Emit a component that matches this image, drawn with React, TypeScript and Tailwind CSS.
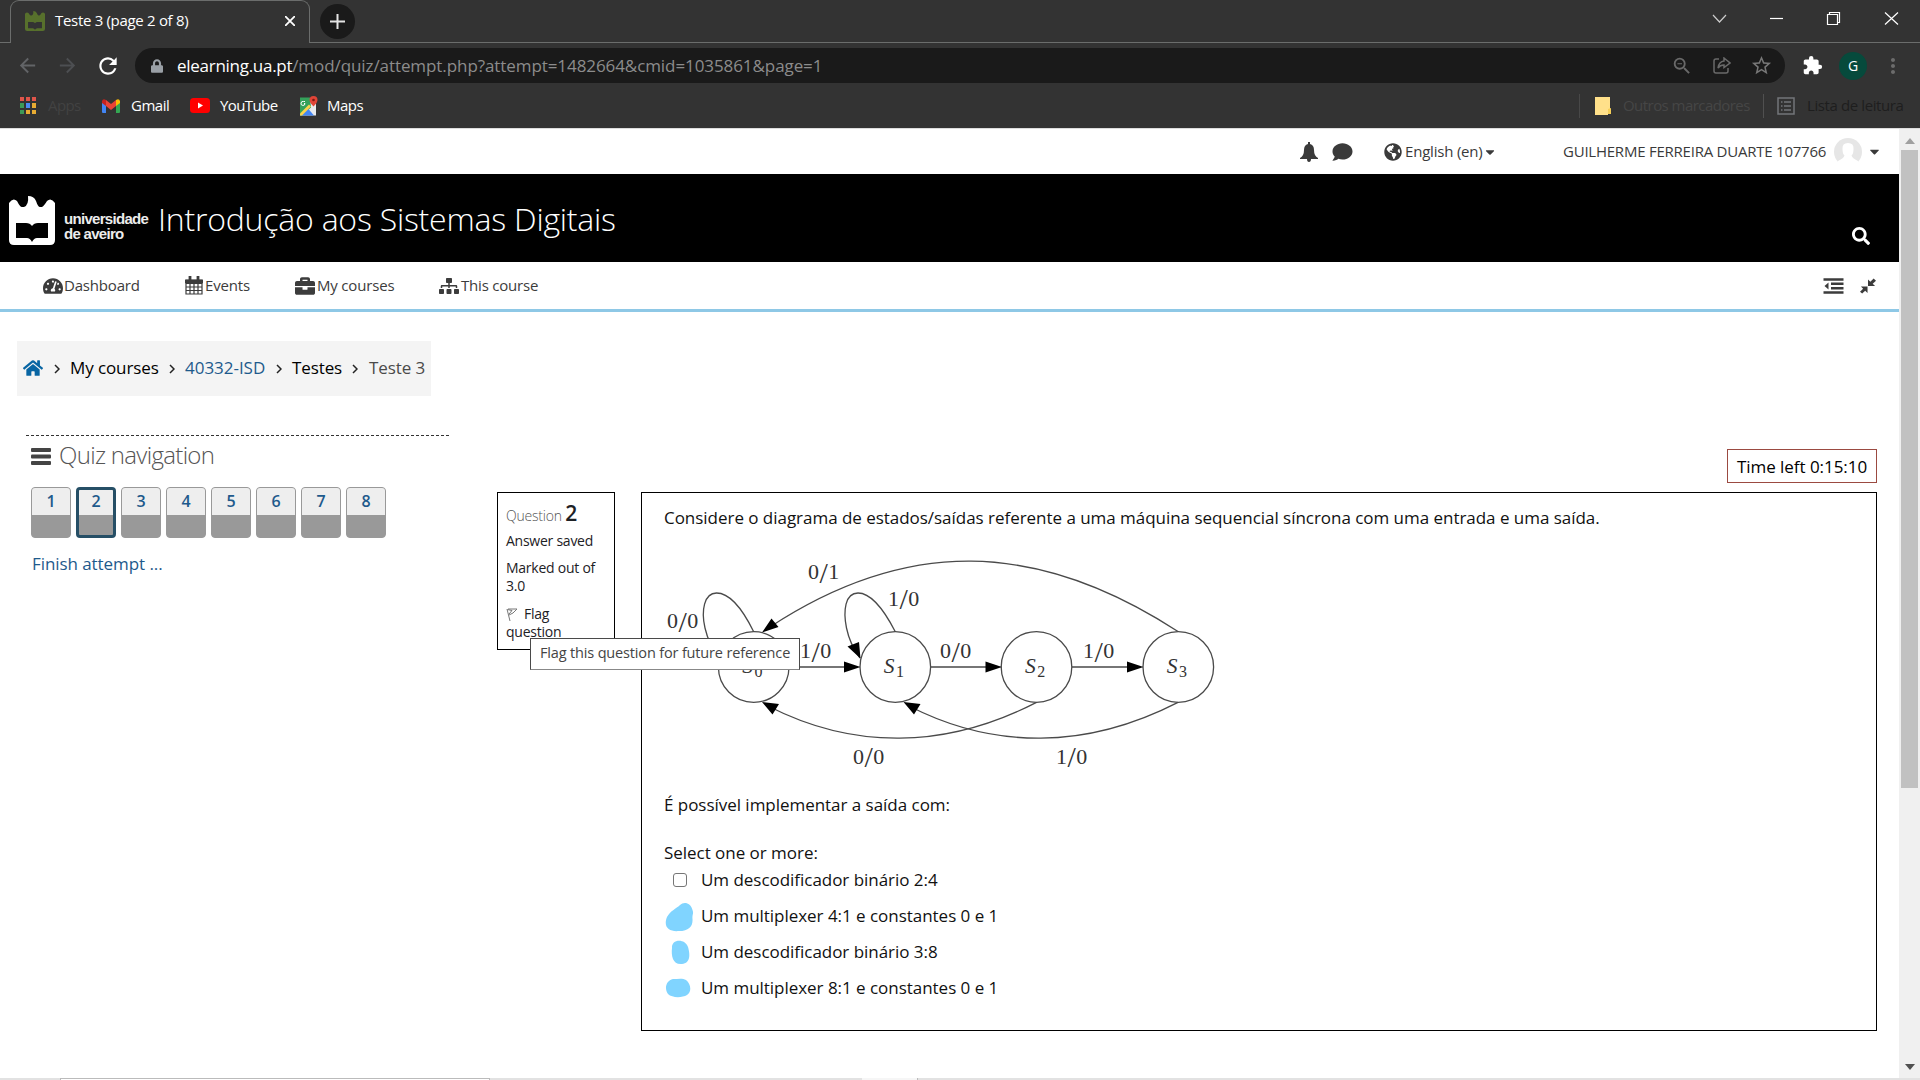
import React from "react";
import {
  FaBell, FaComment, FaGlobeAmericas, FaCaretDown, FaSearch, FaTachometerAlt, FaBriefcase,
  FaSitemap, FaHome, FaLock,
} from "react-icons/fa";
import { MdExtension, MdMoreVert, MdRefresh, MdStarBorder, MdZoomOut, MdArrowBack, MdArrowForward } from "react-icons/md";

const appColors = ["#e0554a", "#e0554a", "#e0554a", "#3d9a57", "#4a8af4", "#e8ac33", "#3d9a57", "#e8ac33", "#e8ac33"];

function Castle({ className, book }: { className: string; book: string }) {
  return (
    <svg viewBox="0 0 46 49" preserveAspectRatio="none" className={className}>
      <path fill="currentColor" d="M0 7Q4 1 8 5Q11 11 13 11H15Q20 9 19 0Q25 0 27 5Q29 11 31 11H33Q35 10 38 5Q42 1 46 7V44Q46 49 41 49H5Q0 49 0 44Z" />
      <path fill={book} d="M7 27H17Q21 27 23 30Q25 27 29 27H39V42H28Q25 42 23 46Q21 42 18 42H7Z" />
    </svg>
  );
}

function Tab() {
  return (
    <div className="flex h-[43px] items-start">
      <div className="h-[43px] w-[10px] border-b border-[#6b6d6c]" />
      <div className="flex h-[43px] w-[300px] items-center rounded-t-[9px] border border-b-0 border-[#6b6d6c] pb-[3px] pl-[14px] pr-[14px]">
        <Castle className="h-5 w-5 text-[#57702c]" book="#333" />
        <span className="ml-[10px] flex-1 whitespace-nowrap text-[15px] tracking-[-0.31px] text-white">Teste 3 (page 2 of 8)</span>
        <svg className="h-[10px] w-[10px]" viewBox="0 0 10 10"><path d="M0 0L10 10M10 0L0 10" stroke="#fff" strokeWidth="1.8" /></svg>
      </div>
      <div className="flex h-[43px] flex-1 border-b border-[#6b6d6c]">
        <div className="ml-[10px] mt-1 flex h-[35px] w-[35px] items-center justify-center rounded-full bg-[#1a1a1a]">
          <svg className="h-[15px] w-[15px]" viewBox="0 0 15 15"><path d="M7.500 0V15M0 7.500H15" stroke="#e4e4e4" strokeWidth="2" /></svg>
        </div>
        <svg className="ml-auto mr-[21px] mt-[8px] h-5 w-[188px]" viewBox="0 0 188 20" fill="none" stroke="#fff" strokeWidth="1.2">
          <path d="M2 7L8.500 14L15 7" stroke="#ccc" />
          <path d="M59 10.500H72" />
          <path d="M116.500 6.500H126.500V16.500H116.500ZM118.500 6V4.500H128.500V14.500H127" />
          <path d="M174 4.500L187 16.500M187 4.500L174 16.500" />
        </svg>
      </div>
    </div>
  );
}

function AddressBar() {
  return (
    <div className="flex h-10 items-center pt-[5px]">
      <MdArrowBack className="ml-[16px] h-[23px] w-[23px] text-[#626467]" />
      <MdArrowForward className="ml-[17px] h-[23px] w-[23px] text-[#4d4f52]" />
      <MdRefresh className="ml-[16px] h-[26px] w-[26px] text-white" />
      <div className="ml-[14px] flex h-[35px] w-[1650px] items-center rounded-full bg-[#1a1a1a] pl-[16px] pr-[12px]">
        <FaLock className="h-[14px] w-[12px] text-[#9aa0a6]" />
        <span className="ml-[14px] flex-1 whitespace-nowrap text-[17px] tracking-[-0.08px] text-[#8c8c8c]">
          <span className="tracking-[-0.28px] text-white">elearning.ua.pt</span>/mod/quiz/attempt.php?attempt=1482664&amp;cmid=1035861&amp;page=1
        </span>
        <MdZoomOut className="h-[22px] w-[22px] text-[#696969]" />
        <svg className="ml-[20px] h-[17px] w-[18px]" viewBox="0 0 18 17" fill="none" stroke="#696969" strokeWidth="1.500">
          <path d="M6 2H3Q1 2 1 4V14Q1 16 3 16H13Q15 16 15 14V11" /><path d="M11 1L17 6L11 10.500V8Q7 8 5 11Q6 4.500 11 4Z" />
        </svg>
        <MdStarBorder className="ml-[19px] h-[23px] w-[23px] text-[#777]" />
      </div>
      <MdExtension className="ml-[17px] h-[21px] w-[21px] text-white" />
      <div className="ml-[16px] flex h-[28px] w-[28px] items-center justify-center rounded-full bg-[#064a3c] text-[14px] text-white">G</div>
      <MdMoreVert className="ml-[14px] h-[24px] w-[24px] text-[#6c6c6c]" />
    </div>
  );
}

function Bookmarks() {
  return (
    <div className="flex h-[45px] items-center whitespace-nowrap text-[15px] text-white">
      <div className="ml-5 grid h-[17px] w-4 grid-cols-3 gap-[2px]">
        {appColors.map((c, i) => <span key={i} style={{ background: c }} />)}
      </div>
      <span className="ml-3 w-[34px] tracking-[-0.6px] text-[#424242]">Apps</span>
      <svg className="ml-5 h-[14px] w-[18px]" viewBox="0 0 18 14">
        <path d="M0 2V13Q0 14 1 14H4V5Z" fill="#4285f4" /><path d="M18 2V13Q18 14 17 14H14V5Z" fill="#34a853" />
        <path d="M14 1V7L18 4V2Q17-1 14 1Z" fill="#fbbc04" /><path d="M4 1L9 5L14 1V7L9 11L4 7Z" fill="#ea4335" /><path d="M4 1V7L0 4V2Q1-1 4 1Z" fill="#c5221f" />
      </svg>
      <span className="ml-[11px] w-[38px] tracking-[-0.5px]">Gmail</span>
      <svg className="ml-[21px] h-[15px] w-5" viewBox="0 0 20 15"><rect width="20" height="15" rx="3.500" fill="#f00" /><path d="M8 4.500L13 7.500L8 10.500Z" fill="#fff" /></svg>
      <span className="ml-[10px] w-[57px] tracking-[-0.6px]">YouTube</span>
      <svg className="ml-[23px] h-[22px] w-[18px]" viewBox="0 -3 18 21">
        <path d="M0 1H16V17H0Z" fill="#e8eaed" /><path d="M0 -1H10L11 9L2 17H0Z" fill="#34a15a" /><path d="M1 17L8 10L14 17Z" fill="#4285f4" />
        <path d="M0 15L9 6L11 8L2 17H0Z" fill="#fbd34a" /><path d="M13.500 8Q9.500 4 9.500 1.500A4 4 0 0 1 17.500 1.500Q17.500 4 13.500 8Z" fill="#e04537" /><circle cx="13.500" cy="1.500" r="1.300" fill="#7c1913" />
        <path d="M5 3H3.500A2 2 0 1 0 5 5H4" stroke="#fff" fill="none" />
      </svg>
      <span className="ml-[9px] tracking-[-0.5px]">Maps</span>
      <div className="ml-auto h-6 w-px bg-[#484848]" />
      <svg className="ml-[15px] h-[18px] w-4" viewBox="0 0 16 18"><path d="M0 0H15V12H13V18H0Z" fill="#ffe08a" /><path d="M13 12V17H16V11Z" fill="#f6cf57" /></svg>
      <span className="ml-3 w-[126px] tracking-[-0.55px] text-[#464646]">Outros marcadores</span>
      <div className="ml-[14px] h-6 w-px bg-[#505050]" />
      <svg className="ml-[13px] h-[18px] w-[18px]" viewBox="0 0 18 18" fill="none" stroke="#73767a" strokeWidth="1.500">
        <path d="M1 1H17V17H1ZM7 5H14M7 9H14M7 13H14M4 5H5.500M4 9H5.500M4 13H5.500" />
      </svg>
      <span className="ml-3 mr-[17px] w-[96px] tracking-[-0.4px] text-[#1e1e1e]">Lista de leitura</span>
    </div>
  );
}

function SiteHeader() {
  return (
    <>
      <div className="flex h-[45px] items-center text-[#3a3a3a]">
        <svg className="ml-[1300px] h-[20px] w-[18px]" viewBox="0 0 18 20" fill="currentColor">
          <path d="M8 0H10V2Q14 3 14 8Q14 14 18 16V17H11Q11 20 9 20Q7 20 7 17H0V16Q4 14 4 8Q4 3 8 2Z" />
        </svg>
        <FaComment className="ml-[14px] h-[20px] w-[21px]" />
        <FaGlobeAmericas className="ml-[31px] h-[18px] w-[18px]" />
        <span className="ml-[3px] w-[80px] whitespace-nowrap text-[15px] tracking-[-0.2px]">English (en)</span>
        <FaCaretDown className="ml-[-1px] h-[14px] w-[12px]" />
        <span className="ml-auto w-[264px] whitespace-nowrap text-[15px] tracking-[-0.23px]">GUILHERME FERREIRA DUARTE 107766</span>
        <svg className="ml-[7px] h-[27px] w-[28px]" viewBox="0 0 28 27">
          <path d="M5 25Q0 20 0 14A14 14 0 0 1 28 14Q28 20 23 25Z" fill="#e6e6e6" />
          <path d="M14 5Q20 5 19.500 11Q19.500 16 17.500 17.500Q18 20 24 23V27H4V23Q10 20 10.500 17.500Q8.500 16 8.500 11Q8 5 14 5Z" fill="#fff" />
        </svg>
        <FaCaretDown className="ml-[6px] mr-[18px] h-[15px] w-[13px]" />
      </div>
      <div className="flex h-[88px] items-start bg-black text-white">
        <Castle className="ml-[9px] mt-[22px] h-[49px] w-[46px]" book="#000" />
        <div className="ml-[9px] mt-[37px] w-[85px] font-['Liberation_Sans'] text-[15px] font-bold leading-[15px] tracking-[-0.7px] text-[#ececec]">
          universidade<br />de aveiro
        </div>
        <h1 className="ml-[9px] mt-[22px] whitespace-nowrap text-[32px] font-light leading-[46px] tracking-[-0.22px]">Introdução aos Sistemas Digitais</h1>
        <FaSearch className="ml-auto mr-[29px] mt-[53px] h-[18px] w-[18px]" />
      </div>
      <nav className="flex h-[50px] items-center whitespace-nowrap border-b-[3px] border-[#8ec8e6] text-[15px] text-[#3c3c3c]">
        <FaTachometerAlt className="ml-[43px] h-[18px] w-[20px]" />
        <span className="ml-[1px] w-[77px] tracking-[-0.18px]">Dashboard</span>
        <svg className="ml-[44px] h-[19px] w-[18px]" viewBox="0 0 18 19" fill="none" stroke="currentColor" strokeWidth="1.500">
          <path d="M1 4H17V18H1ZM1 7.500H17M1 11H17M1 14.500H17M5 7V18M9 7V18M13 7V18" strokeWidth="1.200" /><path d="M0.500 4.500H17.500V6.500H0.500Z" fill="currentColor" /><path d="M5 0V5M13 0V5" strokeWidth="2.800" />
        </svg>
        <span className="ml-[2px] w-[46px] tracking-[-0.18px]">Events</span>
        <FaBriefcase className="ml-[44px] h-[20px] w-[20px]" />
        <span className="ml-[2px] w-[78px] tracking-[-0.18px]">My courses</span>
        <FaSitemap className="ml-[44px] h-[20px] w-[20px]" />
        <span className="ml-[2px] tracking-[-0.2px]">This course</span>
        <svg className="ml-auto h-[16px] w-[21px]" viewBox="0 0 20 16" fill="none" stroke="currentColor" strokeWidth="2.500">
          <path d="M0 1.500H20M7.500 5.800H20M7.500 10.200H20M0 14.500H20" /><path d="M5 4.500V11.500L1 8Z" fill="currentColor" stroke="none" />
        </svg>
        <svg className="ml-[16px] mr-[23px] h-[16px] w-[16px]" viewBox="0 0 17 16" fill="currentColor">
          <path d="M8.500 1L11 3.500L14.500 0L17 2.300L13.500 5.500L16 8H8.500ZM8 8.500V15.500L5.500 13L2.300 16L0 14L3.300 10.800L1 8.500Z" />
        </svg>
      </nav>
    </>
  );
}

function Chevron({ className }: { className: string }) {
  return <svg className={className} viewBox="0 0 6 10" fill="none" stroke="#222" strokeWidth="1.500"><path d="M1 1L5 5L1 9" /></svg>;
}

function Sidebar() {
  return (
    <div className="w-[497px] pt-[29px]">
      <div className="ml-[17px] flex h-[55px] w-[414px] items-center whitespace-nowrap bg-[#f4f4f4] pb-[2px] pl-[6px] text-[17px] tracking-[-0.1px] text-black">
        <FaHome className="h-5 w-5 text-[#0865a3]" />
        <Chevron className="ml-[11px] mt-[2px] h-[10px] w-[6px]" />
        <span className="ml-[10px] w-[89px]">My courses</span>
        <Chevron className="ml-[10px] mt-[2px] h-[10px] w-[6px]" />
        <span className="ml-[10px] w-[81px] tracking-[-0.03px] text-[#1e5a8c]">40332-ISD</span>
        <Chevron className="ml-[10px] mt-[2px] h-[10px] w-[6px]" />
        <span className="ml-[10px] w-[51px]">Testes</span>
        <Chevron className="ml-[9px] mt-[2px] h-[10px] w-[6px]" />
        <span className="ml-[11px] text-[#4a4a4a]">Teste 3</span>
      </div>
      <div className="ml-[26px] mt-[39px] w-[423px] border-t border-dashed border-[#333]" />
      <div className="mt-[3px] flex h-[34px] items-center">
        <svg className="ml-[31px] h-[17px] w-[20px]" viewBox="0 0 20 17" fill="#444"><rect width="20" height="4" rx="1" /><rect y="6.500" width="20" height="4" rx="1" /><rect y="13" width="20" height="4" rx="1" /></svg>
        <h2 className="-mt-[3px] ml-[8px] whitespace-nowrap text-[24px] font-light tracking-[-0.68px] text-[#555]">Quiz navigation</h2>
      </div>
      <div className="ml-[31px] mt-[14px] flex gap-[5px]">
        {[1, 2, 3, 4, 5, 6, 7, 8].map((n) => (
          <div key={n} className={n === 2 ? "flex h-[51px] w-10 flex-col overflow-hidden rounded-[4px] border-[3px] border-[#264f66] bg-[#999]" : "flex h-[51px] w-10 flex-col overflow-hidden rounded-[4px] border border-[#999] bg-[#999]"}>
            <div className={n === 2 ? "h-[25px] bg-[#eee] text-center text-[16px] font-semibold leading-[22px] text-[#1e5a8c]" : "h-[27px] bg-[#eee] text-center text-[16px] font-semibold leading-[26px] text-[#1e5a8c]"}>{n}</div>
          </div>
        ))}
      </div>
      <div className="ml-8 mt-[14px] text-[17px] leading-6 tracking-[-0.07px] text-[#1e5a8c]">Finish attempt ...</div>
    </div>
  );
}

function QuestionInfo() {
  return (
    <div className="relative mt-[180px] h-[158px] w-[118px] border border-black pl-2 text-[14px] leading-[18px] tracking-[-0.25px] text-[#1d2125]">
      <div className="mt-[8px] h-[24px] whitespace-nowrap leading-[24px]"><span className="font-light tracking-[-0.2px] text-[#555]">Question </span><span className="text-[21px] font-semibold">2</span></div>
      <div className="mt-[7px]">Answer saved</div>
      <div className="mt-[9px]">Marked out of<br />3.0</div>
      <div className="mt-[10px]">
        <svg className="mr-[6px] inline h-[13px] w-[12px] align-[-2px]" viewBox="0 0 12 13" fill="none" stroke="#777"><path d="M1 1L4 13M2 1H11L9 3L7 5L3 7M1.500 1.500L6 2.500L3 6" /></svg>
        Flag<br />question
      </div>
      <div className="absolute left-[32px] top-[145px] z-10 flex h-[32px] w-[270px] items-center whitespace-nowrap border border-[#4a4a4a] border-b-[#888] bg-white pb-[2px] pl-[9px] text-[14.5px] tracking-[-0.16px] text-[#444]">
        Flag this question for future reference
      </div>
    </div>
  );
}

const edgeLabels = [
  { x: 808, y: 579, t: "0/1" }, { x: 888, y: 605.5, t: "1/0" }, { x: 667, y: 628, t: "0/0" }, { x: 800, y: 658, t: "1/0" },
  { x: 940, y: 658, t: "0/0" }, { x: 1083, y: 658, t: "1/0" }, { x: 853, y: 763.5, t: "0/0" }, { x: 1056, y: 763.5, t: "1/0" },
];
const states = [753.7, 895.3, 1036.5, 1178.3];

function StateDiagram() {
  return (
    <svg className="-ml-1 block h-[232px] w-[570px]" viewBox="660 545 570 232">
      <g fill="none" stroke="#4a4a4a" strokeWidth="1.300">
        {states.map((x) => <circle key={x} cx={x} cy="667" r="35.300" />)}
        <path d="M1178 631.500C1035 538.500 905 538.500 770 627" />
        <path d="M1036.500 702.300C945 749.500 853 749.500 768 706" />
        <path d="M1178 702.300C1086 749.500 994 749.500 909 706" />
        <path d="M753.700 631.700C741 606 728 593 716.500 593C704 593 701 611 705 628C708 641 713 650 719 658" />
        <path d="M895.300 631.700C882 606 870 593 858 593C845 593 843 611 846.500 628C849 640 854 650 860 658" />
        <path d="M789 667H850M931 667H990M1072 667H1132" />
      </g>
      <g fill="#000">
        <path d="M860.500 667L844 661.500V672.500ZM1002 667L985.500 661.500V672.500ZM1143.500 667L1127 661.500V672.500Z" />
        <path d="M762 632.500L771.500 618.500L778.500 627ZM762 702L779 704L772.500 714.500ZM903.500 702L920.500 704L914 714.500ZM860.500 658.500L847.500 646.500L859 642Z" />
      </g>
      <g fill="#333" fontFamily="Liberation Serif">
        {edgeLabels.map((l, i) => (
          <text key={i} x={l.x} y={l.y} fontSize="22">{l.t[0]}<tspan dx="0.500" dy="3.500" fontSize="30">/</tspan><tspan dx="0.500" dy="-3.500">{l.t[2]}</tspan></text>
        ))}
        {states.map((x, i) => (
          <text key={i} x={x - 11.5} y="673" fontSize="21.500" fontStyle="italic">S<tspan dx="1.500" dy="3.500" fontSize="16" fontStyle="normal">{i}</tspan></text>
        ))}
      </g>
    </svg>
  );
}

const options = [
  { text: "Um descodificador binário 2:4", mark: null },
  { text: "Um multiplexer 4:1 e constantes 0 e 1", mark: "M2 15C5 9 12 6 15 3C19-1 26 1 27.500 8C29 12 27 12 27.500 17C28 24 24 29 14 29C4 30-2 25 2 15Z" },
  { text: "Um descodificador binário 3:8", mark: "M7 10C6 1 20 0 23 9C25 16 26 25 17 26C8 27 6 18 7 10Z" },
  { text: "Um multiplexer 8:1 e constantes 0 e 1", mark: "M8 5C13 5 18 4 21 6C26 10 27 18 22 21C17 24 7 24 3 20C-1 14 1 7 8 5Z" },
];

function Question() {
  return (
    <div className="ml-[26px] flex w-[1236px] flex-col">
      <div className="mt-[137px] flex h-[34px] w-[150px] items-center self-end whitespace-nowrap border border-[#9b4a41] pl-[9px] pt-[2px] text-[17px] tracking-[-0.05px]">Time left 0:15:10</div>
      <div className="mt-[9px] h-[539px] border border-black pl-[22px] text-[17px] leading-6 tracking-[-0.033px] text-[#111]">
        <p className="mt-[13px] whitespace-nowrap">Considere o diagrama de estados/saídas referente a uma máquina sequencial síncrona com uma entrada e uma saída.</p>
        <div className="mt-[15px]"><StateDiagram /></div>
        <p className="mt-[16px]">É possível implementar a saída com:</p>
        <p className="mt-[24px]">Select one or more:</p>
        <div className="-mt-[3px]">
          {options.map((o) => (
            <div key={o.text} className="flex h-9 items-center">
              {o.mark
                ? <svg className="ml-px mr-[-1px] mt-px h-[30px] w-[30px]" viewBox="0 0 30 30"><path d={o.mark} fill="#80d4ff" /></svg>
                : <div className="ml-[9px] mr-[7px] h-[14px] w-[14px] rounded-[3px] border border-[#767676] bg-white" />}
              <span className="ml-[7px]">{o.text}</span>
            </div>
          ))}
        </div>
      </div>
    </div>
  );
}

export default function App() {
  return (
    <div className="flex h-[1080px] w-[1920px] flex-col overflow-hidden bg-white font-['Open_Sans',sans-serif]">
      <header className="h-[128px] bg-[#333]">
        <Tab />
        <AddressBar />
        <Bookmarks />
      </header>
      <div className="flex h-[950px] border-t border-[#ddd]">
        <main className="w-[1899px]">
          <SiteHeader />
          <div className="flex">
            <Sidebar />
            <QuestionInfo />
            <Question />
          </div>
        </main>
        <aside className="flex w-[21px] flex-col items-center bg-[#f0f0f0]">
          <svg className="mt-[9px] h-[6px] w-[10px]" viewBox="0 0 10 6"><path d="M0 6L5 0L10 6Z" fill="#a0a0a0" /></svg>
          <div className="mt-[6px] h-[638px] w-[17px] bg-[#c1c1c1]" />
          <svg className="mb-[8px] mt-auto h-[6px] w-[10px]" viewBox="0 0 10 6"><path d="M0 0L5 6L10 0Z" fill="#505050" /></svg>
        </aside>
      </div>
      <footer className="flex h-[2px] bg-[#e2e2e2]">
        <div className="ml-[60px] w-[430px] border border-b-0 border-[#bbb] bg-white" />
        <div className="ml-[372px] w-[56px] border-r border-[#bbb] bg-[#f6f6f6]" />
      </footer>
    </div>
  );
}
